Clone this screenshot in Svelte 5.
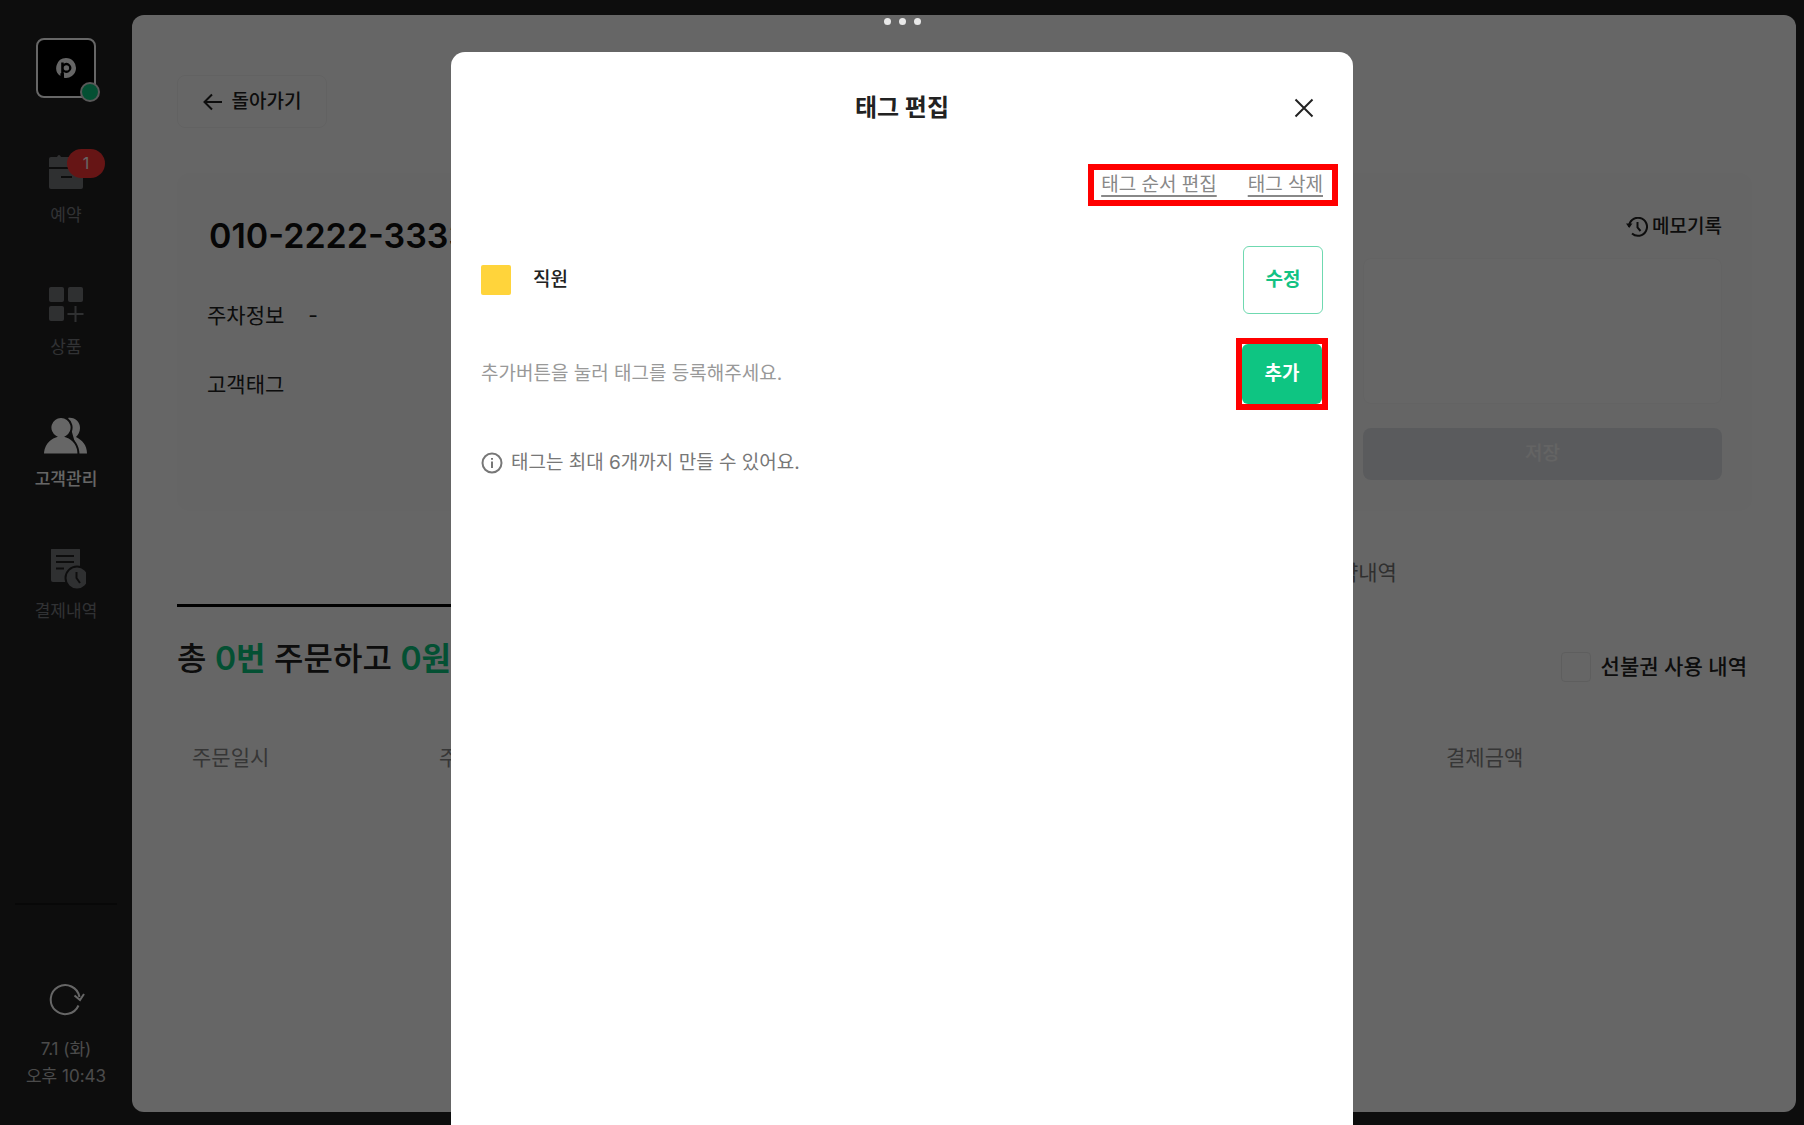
<script>
  let memo = $state('');
  let prepaid = $state(false);

  const columns = ['주문일시', '주문상품', '결제금액'];
</script>

<div class="app">
  <aside class="sidebar">
    <div class="logo">
      <svg width="22" height="22" viewBox="0 0 22 22" aria-hidden="true">
        <path class="mark" d="M11 1a10 10 0 1 1-2 19.800V16.200h-3.600v2.900A10 10 0 0 1 11 1z" />
        <path class="cut" d="M6.200 20.500V5.600h2.500v1.200a4.900 4.900 0 1 1 0 8.200v5.500z" />
        <circle class="mark" cx="11.400" cy="10.900" r="2.700" />
      </svg>
      <span class="status"></span>
    </div>

    <nav>
      <a href="#reservation">
        <span class="icon">
          <svg width="40" height="40" viewBox="0 0 40 40" aria-hidden="true">
            <path d="M3 6q0-2 2-2h6q2-4 4 0h17q5 0 5 5v5H3z" />
            <path d="M3 16h34v18q0 2-2 2H5q-2 0-2-2z" />
            <path class="line" d="M15 24h11" />
          </svg>
          <span class="badge">1</span>
        </span>
        <span>예약</span>
      </a>
      <a href="#product">
        <span class="icon">
          <svg width="40" height="40" viewBox="0 0 40 40" aria-hidden="true">
            <rect x="3" y="2" width="15" height="15" rx="2" />
            <rect x="22" y="2" width="15" height="15" rx="2" />
            <rect x="3" y="21" width="15" height="15" rx="2" />
            <path class="plus" d="M29.500 21v16M21.500 29h16" />
          </svg>
        </span>
        <span>상품</span>
      </a>
      <a href="#customer" class="active" aria-current="page">
        <span class="icon">
          <svg width="44" height="40" viewBox="0 0 44 40" aria-hidden="true">
            <path d="M24 1c7-1 12 4 12 10 0 4-2 7-4 9 6 3 11 8 11 16.500H34z" />
            <path class="gap" d="M17 0a10.500 10.500 0 0 1 5.500 19.500C30 22 34.500 29 34.500 37.500H-1C-1 29 4 22 11.500 19.500A10.500 10.500 0 0 1 17 0z" />
          </svg>
        </span>
        <span>고객관리</span>
      </a>
      <a href="#payment">
        <span class="icon">
          <svg width="40" height="44" viewBox="0 2 40 44" aria-hidden="true">
            <path d="M5 3q0-2 2-2h25q2 0 2 2v32H7q-2 0-2-2z" />
            <path class="line" d="M10 9h18M10 15h18M10 21.500h8" />
            <circle class="gap" cx="31" cy="31" r="11.500" />
            <path class="line" d="M30.500 25v6l3.500 5" />
          </svg>
        </span>
        <span>결제내역</span>
      </a>
    </nav>

    <div class="clock">
      <button type="button" aria-label="새로고침">
        <svg width="38" height="34" viewBox="-1 1 38 34" aria-hidden="true">
          <path d="M30.500 22.500A14.500 14.500 0 1 1 31.500 14" />
          <path d="M26.500 12.500l5.500 4.500 4-6" />
        </svg>
      </button>
      <time>7.1 (화)<br />오후 10:43</time>
    </div>
  </aside>

  <main>
    <button class="back" type="button">
      <svg width="20" height="18" viewBox="0 0 20 18" aria-hidden="true"><path d="M19 9H2M9 1.500L1.500 9 9 16.500" /></svg>
      돌아가기
    </button>

    <section class="card">
      <div class="info">
        <h1>010-2222-3333</h1>
        <dl>
          <div><dt>주차정보</dt><dd>-</dd></div>
          <div><dt>고객태그</dt></div>
        </dl>
      </div>
      <div class="memo">
        <button class="history" type="button">
          <svg width="22" height="20" viewBox="0 0 22 20" aria-hidden="true">
            <path d="M3 10A9 9 0 1 1 6 16.500" />
            <path d="M11.500 5v5.500l3 3.500" />
            <path class="tip" d="M0 6.500h6.500L3.200 11z" />
          </svg>
          메모기록
        </button>
        <textarea aria-label="메모" bind:value={memo}></textarea>
        <button class="save" type="button">저장</button>
      </div>
    </section>

    <div class="tabs" role="tablist">
      <button type="button" role="tab" aria-selected="true">주문내역</button>
      <button type="button" role="tab" aria-selected="false">예약내역</button>
    </div>

    <div class="summary">
      <h2>총 <em>0번</em> 주문하고 <em>0원</em></h2>
      <label><input type="checkbox" bind:checked={prepaid} />선불권 사용 내역</label>
    </div>

    <table>
      <thead>
        <tr>
          {#each columns as column}
            <th scope="col">{column}</th>
          {/each}
        </tr>
      </thead>
    </table>
  </main>
</div>

<div class="scrim">
  <div class="grip" aria-hidden="true"><i></i><i></i><i></i></div>
  <div class="modal" role="dialog" aria-modal="true" aria-labelledby="modal-title">
    <header>
      <h2 id="modal-title">태그 편집</h2>
      <button class="close" type="button" aria-label="닫기">
        <svg width="20" height="20" viewBox="0 0 20 20" aria-hidden="true"><path d="M1.500 1.500l17 17M18.500 1.500l-17 17" /></svg>
      </button>
    </header>

    <div class="links marked">
      <a href="#order">태그 순서 편집</a>
      <a href="#delete">태그 삭제</a>
    </div>

    <div class="row">
      <span class="swatch"></span>
      <span class="name">직원</span>
      <button class="edit" type="button">수정</button>
    </div>
    <div class="row">
      <span class="hint">추가버튼을 눌러 태그를 등록해주세요.</span>
      <span class="frame marked"><button class="add" type="button">추가</button></span>
    </div>

    <p class="note">
      <svg width="22" height="22" viewBox="0 0 22 22" aria-hidden="true">
        <circle cx="11" cy="11" r="9.500" />
        <path d="M11 9.500V16M11 6v1.800" />
      </svg>
      태그는 최대 6개까지 만들 수 있어요.
    </p>
  </div>
</div>

<style>
  :global(body) {
    background: #222;
    font-family: Inter, 'Noto Sans CJK KR', sans-serif;
    font-size: 19px;
    line-height: 30px;
    color: #222;
  }
  button, input, textarea {
    font: inherit;
    color: inherit;
    margin: 0;
    padding: 0;
    border: 0;
    background: none;
    box-sizing: border-box;
  }
  h1, h2, p, dl, dd { margin: 0; }
  a { color: inherit; }
  svg { flex: none; display: block; }

  .app {
    display: flex;
    box-sizing: border-box;
    height: 100vh;
    padding: 15px 8px 13px 0;
    background: #222;
  }

  .sidebar {
    display: flex;
    flex-direction: column;
    align-items: center;
    flex: none;
    width: 132px;
    padding: 23px 0 22px;
    box-sizing: border-box;
    color: #7c7e82;
    font-size: 17px;
    line-height: 24px;
  }
  .logo {
    position: relative;
    display: grid;
    place-items: center;
    width: 60px;
    height: 60px;
    box-sizing: border-box;
    border: 2px solid #fff;
    border-radius: 8px;
    background: #000;
  }
  .logo .mark { fill: #fff; }
  .logo .cut { fill: #000; }
  .status {
    position: absolute;
    right: -6px;
    bottom: -6px;
    width: 16px;
    height: 16px;
    border: 2px solid #ddd;
    border-radius: 50%;
    background: #0ac780;
  }
  nav {
    display: flex;
    flex-direction: column;
    gap: 58px;
    margin-top: 55px;
  }
  nav a {
    display: flex;
    flex-direction: column;
    align-items: center;
    gap: 10px;
    text-decoration: none;
  }
  nav .icon {
    position: relative;
    display: flex;
    justify-content: center;
    height: 40px;
  }
  nav svg { fill: #77787c; }
  nav .line { fill: none; stroke: #222; stroke-width: 2; }
  nav .plus { fill: none; stroke: #77787c; stroke-width: 2; }
  nav .gap { stroke: #222; stroke-width: 2; }
  nav .active { color: #fff; font-weight: 500; }
  nav .active svg { fill: #fff; }
  .badge {
    position: absolute;
    left: 21px;
    top: -4px;
    width: 38px;
    height: 29px;
    border-radius: 15px;
    background: #ff3535;
    color: #fff;
    font-size: 16px;
    line-height: 28px;
    text-align: center;
  }
  .clock {
    display: flex;
    flex-direction: column;
    align-items: center;
    align-self: stretch;
    gap: 18px;
    margin: auto 15px 0;
    padding-top: 79px;
    border-top: 2px solid #151515;
    color: #bbb;
    line-height: 27px;
    text-align: center;
  }
  .clock path { fill: none; stroke: #fff; stroke-width: 2; }

  main {
    flex: 1;
    min-width: 0;
    padding: 60px 44px 0 45px;
    border-radius: 12px;
    background: #fff;
    overflow: hidden;
  }
  .back {
    display: flex;
    align-items: center;
    justify-content: center;
    gap: 9px;
    width: 150px;
    height: 53px;
    border: 1px solid #f5f5f5;
    border-radius: 8px;
    font-weight: 500;
  }
  .back path { fill: none; stroke: #222; stroke-width: 2; }

  .card {
    display: flex;
    justify-content: space-between;
    margin-top: 45px;
    padding: 39px 30px 31px;
    border-radius: 12px;
    background: #fdfdfd;
  }
  h1 {
    padding-left: 2px;
    font-size: 34px;
    font-weight: 600;
    line-height: 48px;
    color: #111;
  }
  dl {
    display: grid;
    gap: 39px;
    margin-top: 41px;
    font-size: 21px;
  }
  dl div { display: flex; gap: 24px; }
  .memo {
    display: flex;
    flex-direction: column;
    width: 359px;
  }
  .history {
    display: flex;
    align-items: center;
    align-self: flex-end;
    gap: 4px;
    font-weight: 500;
  }
  .history path { fill: none; stroke: #222; stroke-width: 2; }
  .history .tip { fill: #222; stroke: none; }
  textarea {
    height: 146px;
    margin: 16px 0 24px;
    border: 1px solid #f8f8f8;
    border-radius: 8px;
    background: #fff;
    resize: none;
  }
  .save {
    height: 52px;
    border-radius: 8px;
    background: #e2e4e8;
    color: #fafafa;
    font-weight: 500;
  }

  .tabs {
    display: grid;
    grid-template-columns: 1fr 1fr;
    margin-top: 30px;
  }
  .tabs button {
    height: 66px;
    border-bottom: 3px solid transparent;
    font-size: 21px;
    color: #777;
  }
  .tabs [aria-selected='true'] { border-color: #000; color: #111; }

  .summary {
    display: flex;
    align-items: center;
    justify-content: space-between;
    margin-top: 28px;
    padding-right: 5px;
  }
  .summary h2 {
    font-size: 32px;
    font-weight: 500;
    line-height: 48px;
  }
  em { color: #0ac780; font-style: normal; font-weight: 600; }
  label {
    display: flex;
    align-items: center;
    gap: 10px;
    margin-top: 16px;
    font-size: 21px;
    font-weight: 500;
  }
  input {
    appearance: none;
    width: 30px;
    height: 30px;
    border: 1px solid #eaeaea;
    border-radius: 4px;
  }
  table {
    width: 100%;
    margin-top: 60px;
    border-collapse: collapse;
    table-layout: fixed;
    font-size: 21px;
    color: #888;
  }
  th {
    padding: 0 15px;
    font-weight: 400;
    text-align: left;
  }
  th:first-child { width: 217px; }
  th:last-child { width: 291px; }

  .scrim {
    position: fixed;
    inset: 0;
    display: flex;
    justify-content: center;
    padding-top: 52px;
    background: rgba(0, 0, 0, 0.6);
  }
  .grip {
    position: absolute;
    top: 18px;
    display: flex;
    gap: 8px;
  }
  .grip i {
    width: 7px;
    height: 7px;
    border-radius: 50%;
    background: #e8e8e8;
  }
  .modal {
    width: 50%;
    box-sizing: border-box;
    padding: 38px 30px 0;
    border-radius: 14px 14px 0 0;
    background: #fff;
  }
  header {
    display: grid;
    grid-template-columns: 1fr auto 1fr;
    align-items: center;
    padding: 0 9px;
  }
  header h2 {
    grid-column: 2;
    font-size: 24px;
    font-weight: 700;
    line-height: 36px;
  }
  .close { justify-self: end; }
  .close path { fill: none; stroke: #222; stroke-width: 2; }
  .marked { outline: 6px solid #f00; }
  .links {
    display: flex;
    gap: 31px;
    width: fit-content;
    margin: 44px -9px 32px auto;
    padding: 0 9px 0 7px;
    color: #888;
  }
  .links a {
    text-decoration-thickness: 2px;
    text-underline-offset: 4px;
  }
  .row {
    display: flex;
    align-items: center;
    padding: 14px 0;
  }
  .row + .row { padding: 16px 0; }
  .swatch {
    width: 30px;
    height: 30px;
    margin-right: 22px;
    border-radius: 2px;
    background: #ffd43b;
  }
  .name { font-weight: 500; }
  .row button {
    display: block;
    width: 80px;
    border-radius: 6px;
    font-weight: 700;
  }
  .edit {
    height: 68px;
    margin-left: auto;
    border: 1px solid #6fd9b0;
    color: #12c283;
  }
  .frame { margin: 0 1px 0 auto; }
  .add {
    height: 60px;
    background: #0ec582;
    color: #fff;
  }
  .hint { color: #999; }
  .note {
    display: flex;
    align-items: center;
    gap: 8px;
    margin-top: 28px;
    color: #777;
  }
  .note svg { fill: none; stroke: #777; stroke-width: 2; }
</style>
